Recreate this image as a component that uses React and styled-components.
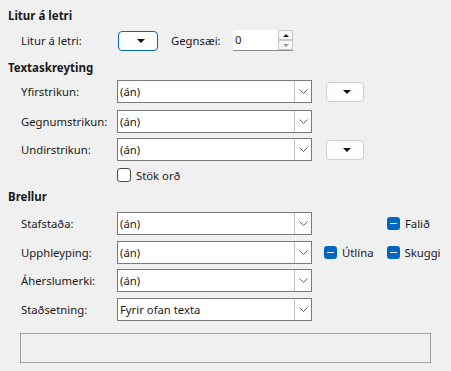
import * as React from 'react'
import styled, { createGlobalStyle } from 'styled-components'

const GlobalStyle = createGlobalStyle`
  html, body {
    margin: 0;
    padding: 0;
    background: #f0f0f0;
  }
  body {
    font-family: 'Segoe UI', 'Noto Sans', 'Open Sans', sans-serif;
    font-size: 11.3px;
    color: #1a1a1a;
  }
`

const Page = styled.div`
  width: 451px;
  height: 371px;
  box-sizing: border-box;
  padding: 8px 0 0 8px;
  display: flex;
  flex-direction: column;
  background: #f0f0f0;
`

const SectionTitle = styled.div`
  font-weight: 700;
  font-size: 11.5px;
  height: 16px;
  line-height: 16px;
  margin-top: ${(p) => p.$top || 0}px;
`

const Row = styled.div`
  display: flex;
  align-items: center;
  height: ${(p) => p.$h || 23}px;
  margin-top: ${(p) => p.$top || 0}px;
  padding-left: 13px;
`

const Label = styled.div`
  width: ${(p) => p.$w || 96}px;
  flex-shrink: 0;
  white-space: nowrap;
`

const ColorButton = styled.div`
  box-sizing: border-box;
  width: ${(p) => (p.$focus ? 40 : 38)}px;
  height: 20px;
  margin-left: ${(p) => p.$ml || 0}px;
  border: 1px solid ${(p) => (p.$focus ? '#0067c0' : '#cfcfcf')};
  border-radius: 4px;
  background: #fdfdfd;
  display: flex;
  align-items: center;
  justify-content: flex-end;
  padding-right: 12px;
`

const Caret = styled.div`
  width: 0;
  height: 0;
  border-left: 4px solid transparent;
  border-right: 4px solid transparent;
  border-top: 4px solid #111;
`

const Spin = styled.div`
  box-sizing: border-box;
  width: 60px;
  height: 21px;
  display: flex;
  background: #fff;
  border-bottom: 1px solid #8a8a8a;
`

const SpinText = styled.div`
  flex: 1;
  padding-left: 2px;
  line-height: 20px;
`

const SpinButtons = styled.div`
  width: 15px;
  display: flex;
  flex-direction: column;
  background: #f0f0f0;
  border-left: 1px solid #fff;
`

const SpinBtn = styled.div`
  flex: 1;
  display: flex;
  align-items: center;
  justify-content: center;
  border: 1px solid #c8c8c8;
  background: #f7f7f7;
`

const SpinArrow = styled.div`
  width: 0;
  height: 0;
  border-left: 3px solid transparent;
  border-right: 3px solid transparent;
  ${(p) => (p.$up ? 'border-bottom: 3px solid #222;' : 'border-top: 3px solid #9a9a9a;')}
`

const Select = styled.div`
  box-sizing: border-box;
  width: 195px;
  height: 23px;
  display: flex;
  border: 1px solid #7a7a7a;
  background: #fff;
  flex-shrink: 0;
`

const SelectText = styled.div`
  flex: 1;
  padding-left: 2px;
  line-height: 21px;
  white-space: nowrap;
`

const SelectArrow = styled.div`
  width: 16px;
  border-left: 1px solid #c4c4c4;
  display: flex;
  align-items: center;
  justify-content: center;
  background: #fff;
`

const PlainCheck = styled.div`
  display: flex;
  align-items: center;
  gap: 5px;
  margin-left: 96px;
`

const CheckBox = styled.div`
  box-sizing: border-box;
  width: 14px;
  height: 14px;
  border: 1px solid #4a4a4a;
  border-radius: 3px;
  background: #fff;
`

const BlueCheck = styled.div`
  display: flex;
  align-items: center;
  gap: 5px;
  margin-left: ${(p) => p.$ml || 0}px;
`

const BlueBox = styled.div`
  width: 13px;
  height: 13px;
  border-radius: 3px;
  background: #0067c0;
  display: flex;
  align-items: center;
  justify-content: center;
  &::after {
    content: '';
    width: 7px;
    height: 1.5px;
    background: #fff;
  }
`

const Preview = styled.div`
  box-sizing: border-box;
  margin: 12px 0 0 12px;
  width: 411px;
  height: 30px;
  border: 1px solid #a0a0a0;
`

const Chevron = () => (
  <svg width="9" height="5" viewBox="0 0 9 5">
    <path d="M0.5 0.5 L4.5 4.5 L8.5 0.5" fill="none" stroke="#606060" strokeWidth="1" />
  </svg>
)

const Dropdown = ({ value }) => (
  <Select>
    <SelectText>{value}</SelectText>
    <SelectArrow>
      <Chevron />
    </SelectArrow>
  </Select>
)

export default function App() {
  return (
    <>
      <GlobalStyle />
      <Page>
        <SectionTitle>Litur á letri</SectionTitle>
        <Row $h={21} $top={6}>
          <Label $w={97}>Litur á letri:</Label>
          <ColorButton $focus>
            <Caret />
          </ColorButton>
          <Label $w={62} style={{ marginLeft: 13 }}>Gegnsæi:</Label>
          <Spin>
            <SpinText>0</SpinText>
            <SpinButtons>
              <SpinBtn>
                <SpinArrow $up />
              </SpinBtn>
              <SpinBtn>
                <SpinArrow />
              </SpinBtn>
            </SpinButtons>
          </Spin>
        </Row>

        <SectionTitle $top={9}>Textaskreyting</SectionTitle>
        <Row $top={4}>
          <Label>Yfirstrikun:</Label>
          <Dropdown value="(án)" />
          <ColorButton $ml={14}>
            <Caret />
          </ColorButton>
        </Row>
        <Row $top={7}>
          <Label>Gegnumstrikun:</Label>
          <Dropdown value="(án)" />
        </Row>
        <Row $top={5}>
          <Label>Undirstrikun:</Label>
          <Dropdown value="(án)" />
          <ColorButton $ml={14}>
            <Caret />
          </ColorButton>
        </Row>
        <Row $h={20} $top={4}>
          <PlainCheck>
            <CheckBox />
            <span>Stök orð</span>
          </PlainCheck>
        </Row>

        <SectionTitle $top={4}>Brellur</SectionTitle>
        <Row $top={7}>
          <Label>Stafstaða:</Label>
          <Dropdown value="(án)" />
          <BlueCheck $ml={75}>
            <BlueBox />
            <span>Falið</span>
          </BlueCheck>
        </Row>
        <Row $top={6}>
          <Label>Upphleyping:</Label>
          <Dropdown value="(án)" />
          <BlueCheck $ml={12}>
            <BlueBox />
            <span>Útlína</span>
          </BlueCheck>
          <BlueCheck $ml={13}>
            <BlueBox />
            <span>Skuggi</span>
          </BlueCheck>
        </Row>
        <Row $top={5}>
          <Label>Áherslumerki:</Label>
          <Dropdown value="(án)" />
        </Row>
        <Row $top={6}>
          <Label>Staðsetning:</Label>
          <Dropdown value="Fyrir ofan texta" />
        </Row>
        <Preview />
      </Page>
    </>
  )
}
